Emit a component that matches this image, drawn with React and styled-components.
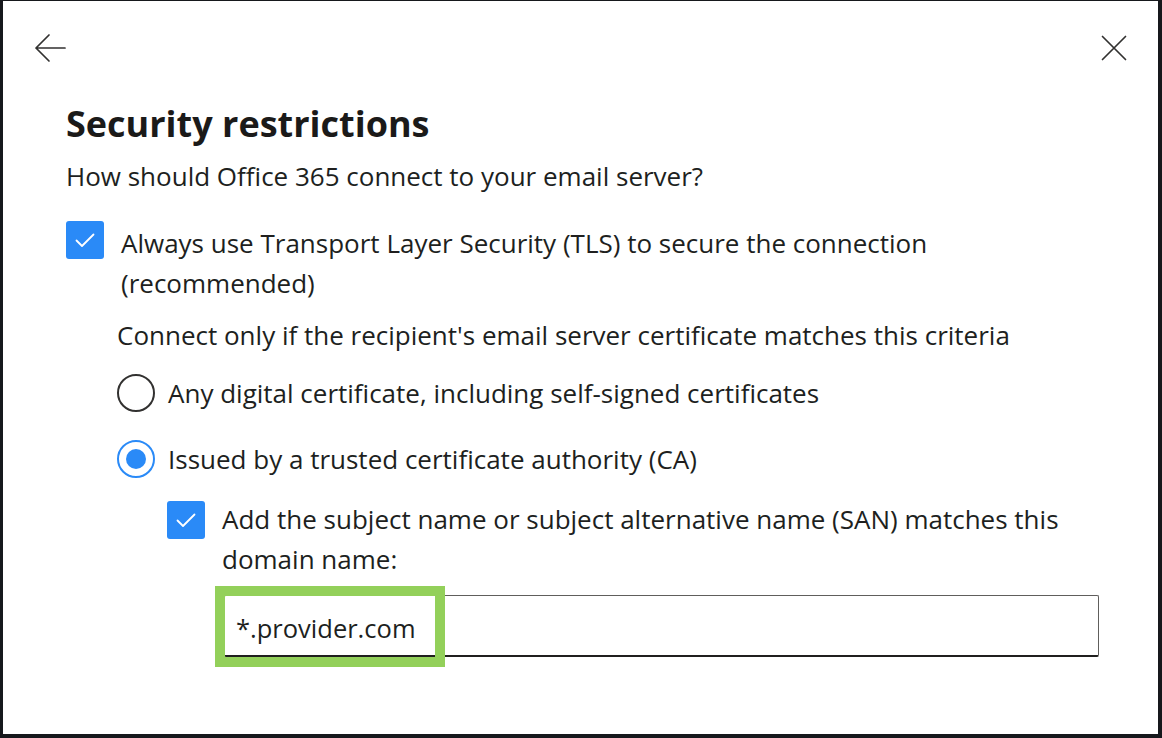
import React from "react";
import styled, { createGlobalStyle } from "styled-components";

const Global = createGlobalStyle`
  html, body { margin: 0; padding: 0; background: #16181c; }
  body { font-family: "Open Sans", "Noto Sans", sans-serif; color: #201f1e; }
  * { box-sizing: border-box; }
`;

const Frame = styled.div`
  width: 1162px;
  height: 738px;
  padding: 1px 4px 4px 3px;
  background: #16181c;
`;

const Panel = styled.div`
  width: 100%;
  height: 100%;
  background: #ffffff;
  display: flex;
  flex-direction: column;
  padding: 0 59px 0 63px;
  position: relative;
`;

const TopBar = styled.div`
  display: flex;
  justify-content: space-between;
  align-items: center;
  height: 94px;
  margin-left: -33px;
  margin-right: -32px;
`;

const IconButton = styled.button`
  border: none;
  background: transparent;
  padding: 0;
  width: 34px;
  height: 34px;
  display: flex;
  align-items: center;
  justify-content: center;
  color: #323130;
  cursor: pointer;
`;

const Title = styled.h1`
  margin: 7px 0 0 0;
  font-size: 36px;
  line-height: 44px;
  font-weight: 700;
  color: #1b1a19;
`;

const Text = styled.p`
  margin: ${(p) => p.$mt || 0}px 0 0 ${(p) => p.$ml || 0}px;
  font-size: 26px;
  line-height: 40px;
`;

const Row = styled.label`
  display: flex;
  align-items: ${(p) => (p.$center ? "center" : "flex-start")};
  margin: ${(p) => p.$mt || 0}px 0 0 ${(p) => p.$ml || 0}px;
  gap: ${(p) => p.$gap || 17}px;
  font-size: 26px;
  line-height: 40px;
`;

const CheckBox = styled.span`
  flex: 0 0 auto;
  width: 38px;
  height: 38px;
  margin-top: ${(p) => p.$mt || 0}px;
  border-radius: 3px;
  background: #2a8af7;
  display: flex;
  align-items: center;
  justify-content: center;
`;

const Radio = styled.span`
  flex: 0 0 auto;
  width: 38px;
  height: 38px;
  border-radius: 50%;
  border: 2px solid ${(p) => (p.$checked ? "#2a8af7" : "#323130")};
  display: flex;
  align-items: center;
  justify-content: center;
  &::after {
    content: "";
    width: 20px;
    height: 20px;
    border-radius: 50%;
    background: ${(p) => (p.$checked ? "#2a8af7" : "transparent")};
  }
`;

const FieldWrap = styled.div`
  position: relative;
  margin: 16px 0 0 158px;
  width: 875px;
`;

const Input = styled.div`
  height: 62px;
  border: 1px solid #605e5c;
  border-bottom: 2px solid #201f1e;
  border-radius: 2px;
  padding: 4px 12px 0 11px;
  display: flex;
  align-items: center;
  font-size: 25.5px;
  color: #201f1e;
`;

const Highlight = styled.div`
  position: absolute;
  left: -9px;
  top: -9px;
  width: 230px;
  height: 81px;
  border: 10px solid #93d05a;
  pointer-events: none;
`;

const Check = () => (
  <svg width="24" height="24" viewBox="0 0 24 24" fill="none">
    <path d="M3.5 12.5 L9 18 L20.5 6.5" stroke="#fff" strokeWidth="1.8" strokeLinecap="round" strokeLinejoin="round" />
  </svg>
);

export default function App() {
  return (
    <>
      <Global />
      <Frame>
        <Panel>
          <TopBar>
            <IconButton aria-label="Back">
              <svg width="34" height="32" viewBox="0 0 34 32" fill="none">
                <path d="M32 16 H3 M16 3 L3 16 L16 29" stroke="#323130" strokeWidth="1.7" strokeLinecap="round" strokeLinejoin="round" />
              </svg>
            </IconButton>
            <IconButton aria-label="Close">
              <svg width="26" height="26" viewBox="0 0 26 26" fill="none">
                <path d="M1.5 1.5 L24.5 24.5 M24.5 1.5 L1.5 24.5" stroke="#323130" strokeWidth="1.7" strokeLinecap="round" />
              </svg>
            </IconButton>
          </TopBar>
          <Title>Security restrictions</Title>
          <Text $mt={10}>How should Office 365 connect to your email server?</Text>
          <Row $mt={27}>
            <CheckBox $mt={-2}><Check /></CheckBox>
            <span>Always use Transport Layer Security (TLS) to secure the connection (recommended)</span>
          </Row>
          <Text $mt={12} $ml={51}>Connect only if the recipient's email server certificate matches this criteria</Text>
          <Row $mt={18} $ml={51} $center $gap={13}>
            <Radio />
            <span>Any digital certificate, including self-signed certificates</span>
          </Row>
          <Row $mt={26} $ml={51} $center $gap={13}>
            <Radio $checked />
            <span>Issued by a trusted certificate authority (CA)</span>
          </Row>
          <Row $mt={20} $ml={101} $gap={17}>
            <CheckBox $mt={2}><Check /></CheckBox>
            <span>Add the subject name or subject alternative name (SAN) matches this domain name:</span>
          </Row>
          <FieldWrap>
            <Input>*.provider.com</Input>
            <Highlight />
          </FieldWrap>
        </Panel>
      </Frame>
    </>
  );
}
